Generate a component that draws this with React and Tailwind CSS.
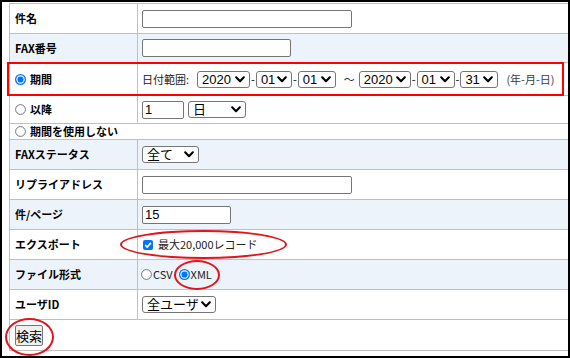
import React from 'react';

const Chevron = () => (
  <svg width="10" height="7" viewBox="0 0 10 7" className="shrink-0">
    <path d="M1.2 1.3 L5 5.2 L8.8 1.3" fill="none" stroke="#000" strokeWidth="2.1" strokeLinecap="round" strokeLinejoin="round" />
  </svg>
);

const Select = ({ className, children }) => (
  <span
    className={`inline-flex items-center justify-between h-[17px] border border-[#767676] rounded-[3px] bg-white pl-[4px] pr-[4px] text-[13px] leading-none text-black font-['Liberation_Sans','Noto_Sans_CJK_JP',sans-serif] ${className}`}
  >
    <span>{children}</span>
    <Chevron />
  </span>
);

const TextBox = ({ className, value }) => (
  <span
    className={`inline-flex items-center h-[18px] border border-[#767676] rounded-[2px] bg-white px-[2px] text-[13px] leading-none text-black font-['Liberation_Sans',sans-serif] ${className}`}
  >
    {value}
  </span>
);

const Radio = ({ checked }) => (
  <svg width="11" height="11" viewBox="0 0 11 11" className="shrink-0">
    {checked ? (
      <>
        <circle cx="5.5" cy="5.5" r="5.5" fill="#0075ff" />
        <circle cx="5.5" cy="5.5" r="4.2" fill="#fff" />
        <circle cx="5.5" cy="5.5" r="3.1" fill="#0075ff" />
      </>
    ) : (
      <circle cx="5.5" cy="5.5" r="4.9" fill="#fff" stroke="#767676" strokeWidth="1" />
    )}
  </svg>
);

const Checkbox = () => (
  <svg width="10" height="10" viewBox="0 0 10 10" className="shrink-0">
    <rect x="0" y="0" width="10" height="10" rx="2" fill="#0075ff" />
    <path d="M2.2 5.2 L4.2 7.1 L7.9 2.9" fill="none" stroke="#fff" strokeWidth="1.6" />
  </svg>
);

const Row = ({ h, blue, label, children }) => (
  <div className={`flex border-b border-[#c0c0c0] ${h} ${blue ? 'bg-[#ecf3fa]' : 'bg-white'}`}>
    <div className="w-[128px] shrink-0 border-r border-[#c0c0c0] pl-[5px] flex items-center font-bold">
      {label}
    </div>
    <div className="flex-1 pl-[4px] flex items-center">{children}</div>
  </div>
);

const Dash = () => <span className="mx-[1px] text-[11px]">-</span>;

export default function App() {
  return (
    <div className="w-[570px] h-[358px] border-2 border-black bg-white relative overflow-hidden font-['Noto_Sans_CJK_JP',sans-serif] text-[11px] leading-none text-black">
      <div className="ml-[7px] mt-px w-[562px] border-t border-l border-[#c0c0c0]">
        <Row h="h-[30px]" label="件名">
          <TextBox className="w-[210px]" />
        </Row>
        <Row h="h-[29px]" blue label="FAX番号">
          <TextBox className="w-[149px]" />
        </Row>
        <Row
          h="h-[33px]"
          label={
            <span className="flex items-center gap-[4px]">
              <Radio checked />
              期間
            </span>
          }
        >
          <span className="text-[#222] mr-[8px]">日付範囲:</span>
          <Select className="w-[53px]">2020</Select>
          <Dash />
          <Select className="w-[36px]">01</Select>
          <Dash />
          <Select className="w-[38px]">01</Select>
          <span className="ml-[8px] mr-[4px] text-[#222]">～</span>
          <Select className="w-[52px]">2020</Select>
          <Dash />
          <Select className="w-[38px]">01</Select>
          <Dash />
          <Select className="w-[38px]">31</Select>
          <span className="ml-[8px] text-[#3a3a4a]">(年-月-日)</span>
        </Row>
        <Row
          h="h-[28px]"
          label={
            <span className="flex items-center gap-[4px]">
              <Radio />
              以降
            </span>
          }
        >
          <TextBox className="w-[42px]" value="1" />
          <Select className="w-[58px] ml-[4px]">日</Select>
        </Row>
        <div className="flex items-center h-[16px] border-b border-[#c0c0c0] pl-[5px] gap-[4px] font-bold">
          <Radio />
          期間を使用しない
        </div>
        <Row h="h-[30px]" blue label="FAXステータス">
          <Select className="w-[57px]">全て</Select>
        </Row>
        <Row h="h-[30px]" label="リプライアドレス">
          <TextBox className="w-[210px]" />
        </Row>
        <Row h="h-[30px]" blue label="件/ページ">
          <TextBox className="w-[89px]" value="15" />
        </Row>
        <Row h="h-[30px]" label="エクスポート">
          <span className="flex items-center gap-[5px] pl-px text-[#222]">
            <Checkbox />
            最大20,000レコード
          </span>
        </Row>
        <Row h="h-[30px]" blue label="ファイル形式">
          <span className="flex items-center -ml-px text-[#222]">
            <Radio />
            <span className="ml-px">CSV</span>
            <span className="ml-[6px]">
              <Radio checked />
            </span>
            <span className="ml-px">XML</span>
          </span>
        </Row>
        <Row h="h-[30px]" label="ユーザID">
          <Select className="w-[74px]">全ユーザ</Select>
        </Row>
        <div className="flex items-center h-[31px] border-b border-[#c0c0c0] pl-[5px]">
          <button
            type="button"
            className="w-[28px] h-[21px] border border-[#767676] rounded-[2px] bg-[#efefef] text-[13px] leading-none text-black p-0"
          >
            検索
          </button>
        </div>
      </div>

      {/* red annotations */}
      <div className="absolute left-[5px] top-[60px] w-[557px] h-[34px] border-2 border-[#f00]" />
      <div className="absolute left-[118px] top-[228px] w-[167px] h-[29px] border-2 border-[#e3141b] rounded-[50%]" />
      <div className="absolute left-[172px] top-[258px] w-[46px] h-[30px] border-2 border-[#e3141b] rounded-[50%]" />
      <div className="absolute left-[3px] top-[316px] w-[49px] h-[38px] border-2 border-[#e3141b] rounded-[50%]" />
    </div>
  );
}
